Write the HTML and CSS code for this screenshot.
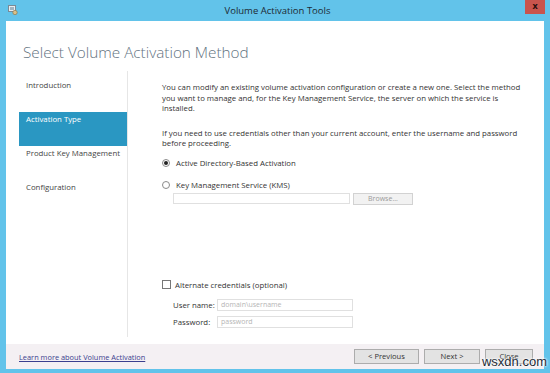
FILE: index.html
```html
<!DOCTYPE html>
<html lang="en">
    <head>
        <meta charset="UTF-8">
        <meta name="viewport" content="width=device-width, initial-scale=1.0">
        <link rel="stylesheet" href="styles.css">
        <title>Volume Activation Tools</title>
    </head>
    <body>
        <div class="window">
            <div class="titlebar">
                <span class="app-icon">
                    <svg width="10" height="10" viewBox="0 0 10 10">
                        <rect x="0.5" y="0.5" width="7" height="6" fill="#e8eef2" stroke="#7a8a96"/>
                        <rect x="2" y="2" width="4" height="3" fill="#9fb4c2"/>
                        <circle cx="7" cy="7.5" r="2.2" fill="#d8c08a" stroke="#8a7040" stroke-width="0.6"/>
                    </svg>
                </span>
                <span class="title">Volume Activation Tools</span>
                <span class="close-btn">x</span>
            </div>
            <div class="frame">
                <h1 class="heading">Select Volume Activation Method</h1>
                <div class="main">
                    <ul class="steps">
                        <li>Introduction</li>
                        <li class="active">Activation Type</li>
                        <li>Product Key Management</li>
                        <li>Configuration</li>
                    </ul>
                    <div class="content">
                        <p class="intro">You can modify an existing volume activation configuration or create a new one. Select the method you want to manage and, for the Key Management Service, the server on which the service is installed.</p>
                        <p class="intro second">If you need to use credentials other than your current account, enter the username and password before proceeding.</p>
                        <div class="option first-option"><span class="radio checked"></span>Active Directory-Based Activation</div>
                        <div class="option"><span class="radio"></span>Key Management Service (KMS)</div>
                        <div class="kms-row">
                            <span class="field kms-field"></span>
                            <span class="small-btn">Browse...</span>
                        </div>
                        <div class="option alt-option"><span class="checkbox"></span>Alternate credentials (optional)</div>
                        <div class="cred-row user-row">
                            <span class="cred-label">User name:</span>
                            <span class="field cred-field">domain\username</span>
                        </div>
                        <div class="cred-row">
                            <span class="cred-label">Password:</span>
                            <span class="field cred-field">password</span>
                        </div>
                    </div>
                </div>
                <div class="footer">
                    <a class="learn-link" href="#">Learn more about Volume Activation</a>
                    <div class="buttons">
                        <span class="btn prev-btn">&lt; Previous</span>
                        <span class="btn next-btn">Next &gt;</span>
                        <span class="btn close-wizard">Close</span>
                    </div>
                </div>
            </div>
            <span class="watermark">wsxdn.com</span>
        </div>
    </body>
</html>
```

FILE: styles.css
```css
body {
    margin: 0;
    font-family: "Open Sans", "Noto Sans", sans-serif;
    background-color: #62c3ea;
}

.window {
    position: relative;
    width: 550px;
    height: 373px;
    box-sizing: border-box;
    padding: 0 6px 4px 6px;
    background-color: #62c3ea;
    display: flex;
    flex-direction: column;
}

.titlebar {
    height: 21px;
    display: flex;
    align-items: flex-start;
    justify-content: space-between;
}

.app-icon {
    margin-top: 5px;
    margin-left: 2px;
    width: 10px;
    height: 10px;
    display: flex;
}

.title {
    margin-top: 4px;
    font-size: 9.5px;
    line-height: 14px;
    color: #1d2a33;
    margin-left: 12px;
}

.close-btn {
    width: 20px;
    height: 14px;
    margin-right: -1px;
    background-color: #c9544d;
    color: #2a0e0c;
    font-size: 9px;
    font-weight: bold;
    line-height: 12px;
    text-align: center;
}

.frame {
    flex: 1;
    background-color: #fff;
    display: flex;
    flex-direction: column;
}

.heading {
    margin: 0 0 8px 0;
    padding: 20px 0 0 17px;
    font-size: 15.3px;
    font-weight: 300;
    line-height: 22px;
    color: #63737f;
}

.main {
    flex: 1;
    display: flex;
    padding-bottom: 7px;
}

.steps {
    list-style: none;
    margin: 0;
    padding: 7px 0 0 13px;
    width: 108px;
    border-right: 1px solid #e6e6e6;
}

.steps li {
    height: 34px;
    box-sizing: border-box;
    padding: 1px 0 0 7px;
    font-size: 7.8px;
    line-height: 12px;
    color: #444;
    white-space: nowrap;
}

.steps li.active {
    background-color: #2a97c2;
    color: #fff;
}

.content {
    padding: 11px 0 0 34px;
    font-size: 7.8px;
    color: #333;
}

.intro {
    margin: 0;
    width: 362px;
    line-height: 10.5px;
}

.intro.second {
    margin-top: 14px;
}

.option {
    display: flex;
    align-items: center;
    line-height: 10px;
    margin-top: 12px;
}

.option.first-option {
    margin-top: 9px;
}

.radio {
    width: 6px;
    height: 6px;
    border: 1px solid #8a8a8a;
    border-radius: 50%;
    margin-right: 6px;
    position: relative;
}

.radio.checked::after {
    content: "";
    position: absolute;
    left: 1px;
    top: 1px;
    width: 4px;
    height: 4px;
    border-radius: 50%;
    background-color: #222;
}

.kms-row {
    display: flex;
    gap: 3px;
    margin: 3px 0 0 11px;
}

.field {
    height: 11px;
    box-sizing: border-box;
    border: 1px solid #e0e0e0;
    background-color: #fff;
}

.kms-field {
    width: 177px;
}

.small-btn {
    width: 60px;
    height: 12px;
    box-sizing: border-box;
    border: 1px solid #d2d2d2;
    background-color: #f2f2f2;
    color: #9a9a9a;
    font-size: 7px;
    line-height: 10px;
    text-align: center;
}

.option.alt-option {
    margin-top: 75px;
}

.checkbox {
    width: 7px;
    height: 7px;
    border: 1px solid #777;
    margin-right: 4px;
}

.cred-row {
    display: flex;
    align-items: center;
    margin: 5px 0 0 11px;
}

.user-row {
    margin-top: 9px;
}

.cred-label {
    width: 44px;
    white-space: nowrap;
    color: #333;
}

.cred-field {
    width: 136px;
    height: 12px;
    padding-left: 3px;
    font-size: 7px;
    line-height: 10px;
    color: #b5b5b5;
}

.footer {
    height: 25px;
    background-color: #f4f0f3;
    display: flex;
    align-items: center;
    justify-content: space-between;
    padding: 0 11px 0 13px;
}

.learn-link {
    font-size: 7.4px;
    color: #3b3f8f;
}

.buttons {
    display: flex;
    gap: 5px;
    margin-top: -1px;
}

.btn {
    height: 15px;
    box-sizing: border-box;
    border: 1px solid #acacac;
    background-color: #e3e3e3;
    font-size: 7.6px;
    line-height: 13px;
    color: #333;
    text-align: center;
}

.prev-btn {
    width: 65px;
}

.next-btn {
    width: 56px;
}

.close-wizard {
    width: 48px;
}

.watermark {
    position: absolute;
    right: 3px;
    bottom: 4px;
    font-family: "Liberation Sans", sans-serif;
    font-size: 13px;
    color: #1d2b36;
    text-shadow: 0 0 2px #fff, 0 0 2px #fff, 0 0 3px #fff;
}
```
